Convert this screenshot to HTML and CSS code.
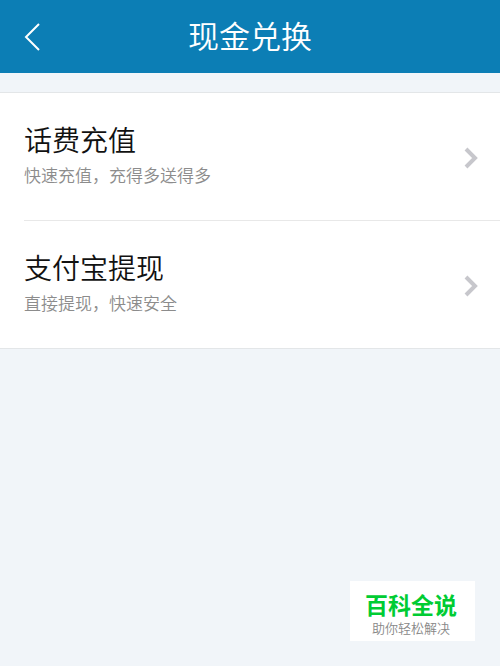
FILE: index.html
```html
<!DOCTYPE html>
<html lang="zh-CN">
	<head>
		<meta charset="UTF-8">
		<meta name="viewport" content="width=device-width, initial-scale=1">
		<title>现金兑换</title>
		<link rel="stylesheet" href="styles.css">
	</head>
	<body>
		<header class="topbar">
			<button class="back" type="button" aria-label="返回">
				<svg width="18" height="30" viewBox="0 0 18 30"><path d="M15 2 L2 15 L15 28"/></svg>
			</button>
			<h1>现金兑换</h1>
		</header>
		<main>
			<ul class="list">
				<li>
					<a class="item" href="#recharge">
						<span class="text">
							<span class="name">话费充值</span>
							<span class="desc">快速充值，充得多送得多</span>
						</span>
						<svg class="arrow" width="14" height="22" viewBox="0 0 14 22"><path d="M2 3 L11 12 L2 21"/></svg>
					</a>
				</li>
				<li>
					<a class="item" href="#alipay">
						<span class="text">
							<span class="name">支付宝提现</span>
							<span class="desc">直接提现，快速安全</span>
						</span>
						<svg class="arrow" width="14" height="22" viewBox="0 0 14 22"><path d="M2 3 L11 12 L2 21"/></svg>
					</a>
				</li>
			</ul>
		</main>
		<div class="badge">
			<strong>百科全说</strong>
			<span>助你轻松解决</span>
		</div>
	</body>
</html>
```

FILE: styles.css
```css
* {
	box-sizing: border-box;
}
body {
	margin: 0;
	min-height: 100vh;
	background-color: #f1f5f9;
	font-family: "Liberation Sans", "Noto Sans CJK SC", sans-serif;
}
.topbar {
	display: grid;
	grid-template-columns: 66px 1fr 66px;
	align-items: center;
	height: 73px;
	background-color: #0c7eb5;
	color: #fff;
}
.topbar h1 {
	grid-column: 2;
	margin: 0;
	padding-top: 2px;
	font-size: 31px;
	font-weight: 350;
	line-height: 44px;
	text-align: center;
}
.back {
	display: flex;
	height: 100%;
	align-items: center;
	padding: 0 24px;
	border: 0;
	background: none;
}
svg {
	flex: none;
	fill: none;
	overflow: visible;
}
.back svg {
	stroke: #fff;
	stroke-width: 2;
}
.list {
	margin: 19px 0 0;
	padding: 0 0 0 24px;
	border-top: 1px solid #e3e6e8;
	border-bottom: 1px solid #e3e6e8;
	background-color: #fff;
	list-style: none;
}
.list li + li {
	border-top: 1px solid #e8e8e8;
}
.item {
	display: flex;
	align-items: center;
	justify-content: space-between;
	height: 127px;
	padding-right: 22px;
	color: #111;
	text-decoration: none;
}
.name,
.desc {
	display: block;
	font-weight: 350;
}
.name {
	font-size: 28px;
	line-height: 40px;
}
.desc {
	color: #8c8c8c;
	font-size: 17px;
	line-height: 30px;
}
.arrow {
	stroke: #c7c7cc;
	stroke-width: 4;
}
.badge {
	position: fixed;
	right: 25px;
	bottom: 25px;
	padding: 11px 18px 4px 15px;
	background-color: #fff;
	text-align: center;
}
.badge strong,
.badge span {
	display: block;
}
.badge strong {
	color: #0c3;
	font-size: 23px;
	line-height: 28px;
}
.badge span {
	color: #888;
	font-size: 13px;
	font-weight: 350;
	line-height: 17px;
}
```
